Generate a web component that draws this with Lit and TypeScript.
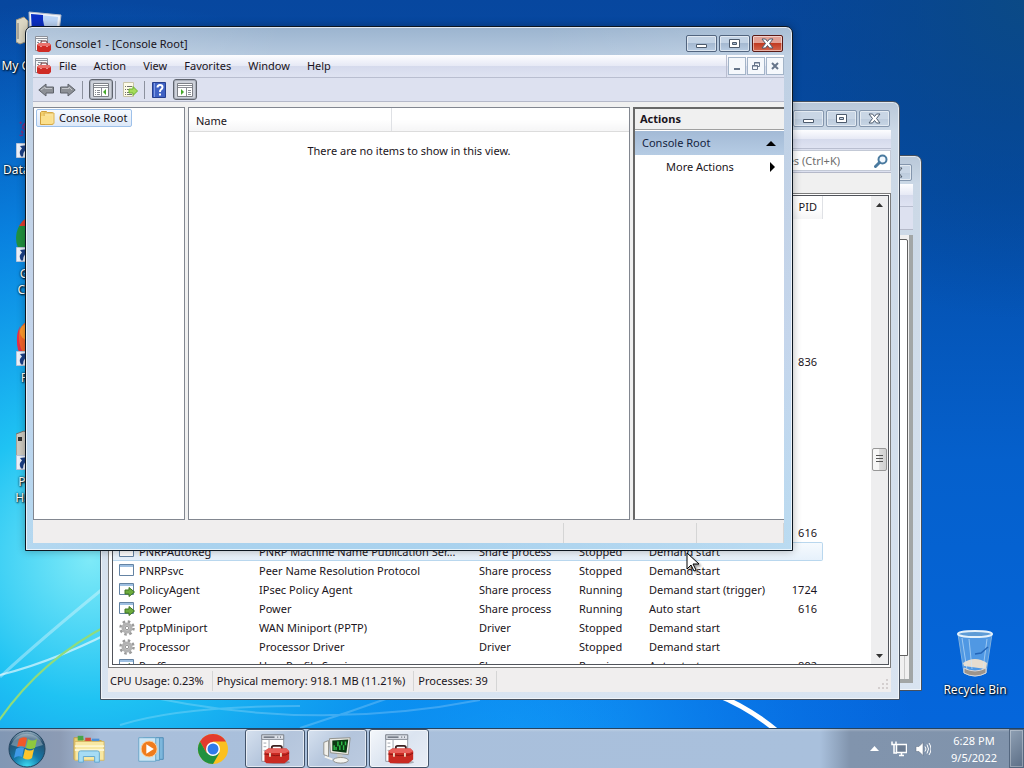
import { LitElement, html, css, svg, nothing, type TemplateResult } from "lit";
import { customElement, property } from "lit/decorators.js";
import { classMap } from "lit/directives/class-map.js";

type ServiceIcon = "stopped" | "running" | "driver";

interface ServiceRow {
    icon?: ServiceIcon;
    name?: string;
    description?: string;
    type?: string;
    status?: string;
    start?: string;
    pid?: string;
    selected?: boolean;
}

// Rows above the selected one carry only the fields that are needed.
const leadingRows: ServiceRow[] = Array.from({ length: 17 }, (_, i) => ({
    pid: i === 7 ? "836" : i === 16 ? "616" : "",
}));

const services: ServiceRow[] = [
    ...leadingRows,
    { icon: "stopped", name: "PNRPAutoReg", description: "PNRP Machine Name Publication Ser...", type: "Share process", status: "Stopped", start: "Demand start", selected: true },
    { icon: "stopped", name: "PNRPsvc", description: "Peer Name Resolution Protocol", type: "Share process", status: "Stopped", start: "Demand start" },
    { icon: "running", name: "PolicyAgent", description: "IPsec Policy Agent", type: "Share process", status: "Running", start: "Demand start (trigger)", pid: "1724" },
    { icon: "running", name: "Power", description: "Power", type: "Share process", status: "Running", start: "Auto start", pid: "616" },
    { icon: "driver", name: "PptpMiniport", description: "WAN Miniport (PPTP)", type: "Driver", status: "Stopped", start: "Demand start" },
    { icon: "driver", name: "Processor", description: "Processor Driver", type: "Driver", status: "Stopped", start: "Demand start" },
    { icon: "running", name: "ProfSvc", description: "User Profile Service", type: "Share process", status: "Running", start: "Auto start", pid: "892" },
];

const toolbox = svg`
  <path d="M3 1h24v29H3z" fill="#fff" stroke="#8b919b"/>
  <path d="M3 1h24v5H3z" fill="#dfe3ea" stroke="#7d838d"/>
  <path d="M5 3.500h12M20 3.500h1M23 3.500h1" stroke="#555c68" stroke-width="1.500"/>
  <path d="M11 6v20M5 10h3M5 14h3M5 18h3M5 22h3" stroke="#9aa1ab"/>
  <ellipse cx="21" cy="31" rx="13" ry="2" fill="#000" opacity=".25"/>
  <path d="M14 17v-2q0-2 2-2h7q2 0 2 2v2" fill="none" stroke="#3c2020" stroke-width="2"/>
  <path d="M6 19l4-3h20l3 3v9l-5 4H8l-2-2z" fill="#c92a22"/>
  <path d="M6 19l4-3h20l3 3-4 2H8z" fill="#e8605a"/>
  <path d="M6 22q12 3 23 1l4-2" fill="none" stroke="#8a1612"/>
  <path d="M12 21v4M24 21v4" stroke="#f0d8c0" stroke-width="2"/>
`;

const icons: Record<string, TemplateResult> = {
    toolbox: html`<svg viewBox="0 0 35 33">${toolbox}</svg>`,
    mmc: html`<svg viewBox="0 0 16 16">
      <path d="M.500.500h12v14h-12z" fill="#f6f7f9" stroke="#8d929b" />
      <path d="M1 2.500h11M3 4.500h4M2 6.500h2" stroke="#8d929b" />
      <path d="M6 8V6q0-1 1-1h4q1 0 1 1v2" fill="none" stroke="#5a2020" />
      <path d="M2 9l2-2h10l2 2v5l-2 2H4l-2-1z" fill="#cf2b25" />
      <path d="M2 9l2-2h10l2 2-2 1H4z" fill="#ea716b" />
      <path d="M6 10v1M12 10v1" stroke="#fff" />
    </svg>`,
    back: html`<svg viewBox="0 0 16 14"><path d="M8 1v3h7.500v6H8v3L.8 7z" fill="#8d9096" stroke="#5f636b" /><path d="M3 7l4-3v1.500h7" fill="none" stroke="#c3c5ca" /></svg>`,
    forward: html`<svg viewBox="0 0 16 14"><path d="M8 1v3H.500v6H8v3l7.200-6z" fill="#8d9096" stroke="#5f636b" /><path d="M2 5.500h7V4l3 3" fill="none" stroke="#c3c5ca" /></svg>`,
    tree: html`<svg viewBox="0 0 16 16"><path d="M.500 1.500h15v13H.500z" fill="#fff" stroke="#7d8087" /><path d="M1 3.500h14M1 5.500h14M8.500 6v8" stroke="#8a8d94" /><path d="M2 8.500h1M4 8.500h3M2 10.500h1M4 10.500h3M2 12.500h1M4 12.500h3" stroke="#8a8d94" /><path d="M13 7v6l-3-3z" fill="#45a82a" /></svg>`,
    pane: html`<svg viewBox="0 0 16 16"><path d="M.500 1.500h15v13H.500z" fill="#fff" stroke="#7d8087" /><path d="M1 3.500h14M1 5.500h14M9.500 6v8" stroke="#8a8d94" /><path d="M11 8.500h3M11 10.500h3M11 12.500h3" stroke="#8a8d94" /><path d="M4 7v6l3-3z" fill="#45a82a" /></svg>`,
    export: html`<svg viewBox="0 0 16 16"><path d="M1.500.500h10v14h-10z" fill="#fdfbe8" stroke="#c8c4a8" /><path d="M3 4.500h1M5 4.500h5M3 7.500h1M5 7.500h4M3 10.500h1M5 10.500h3M3 12.500h1M5 12.500h5" stroke="#707070" /><path d="M7 7h4V4.500L15.500 9 11 13.500V11H7z" fill="#a5dc5a" stroke="#6fb030" /></svg>`,
    help: html`<svg viewBox="0 0 14 16"><path d="M.500.500h13v15H.500z" fill="#3f62c4" stroke="#263f8f" /><path d="M2.500 1v14" stroke="#7f9be4" /><path d="M5.500 5.500q0-2.500 2.500-2.500t2.500 2.300q0 1.400-1.500 2.200Q8 8.200 8 10" fill="none" stroke="#fff" stroke-width="2" /><path d="M7 11.500h2v2H7z" fill="#fff" /></svg>`,
    folder: html`<svg viewBox="0 0 16 16"><path d="M1.500 2.500l1-1h5l1 1h5v12h-12z" fill="#f3cf6c" stroke="#cf9f3d" /><path d="M5 3h10v10q0 1-1 1H6z" fill="#fae29a" stroke="#dcb452" /><path d="M2 6h11v8H2z" fill="#fbe08d" /></svg>`,
    stopped: html`<svg viewBox="0 0 16 16"><path d="M.500 1.500h14v11H.500z" fill="#fff" stroke="#6483a3" /><path d="M1 3h13" stroke="#9fc0e2" stroke-width="2" /></svg>`,
    running: html`<svg viewBox="0 0 16 16"><path d="M.500 1.500h14v11H.500z" fill="#fff" stroke="#6483a3" /><path d="M1 3h13" stroke="#9fc0e2" stroke-width="2" /><path d="M6 8h4V5.500l5.500 4.500-5.500 4.500V12H6z" fill="#6cab3d" stroke="#417724" /></svg>`,
    driver: html`<svg viewBox="0 0 16 16"><circle cx="8" cy="8" r="6.500" fill="none" stroke="#9a9a9a" stroke-width="2.500" stroke-dasharray="2.500 2.600" /><circle cx="8" cy="8" r="4" fill="#e4e4e4" stroke="#b2b2b2" stroke-width="3" /><circle cx="8" cy="8" r="1.800" fill="#fff" stroke="#8f8f8f" /></svg>`,
    search: html`<svg viewBox="0 0 14 14"><circle cx="8.500" cy="5.500" r="4" fill="#f2f8ff" stroke="#4a7a9f" stroke-width="2" /><path d="M5.500 8.500L1.500 12.500" stroke="#4a7a9f" stroke-width="3" stroke-linecap="round" /></svg>`,
    computer: html`<svg viewBox="0 0 48 48"><path d="M0 14l8-3 4 4v20l-8 3-4-2z" fill="#ddd8c4" stroke="#99917c" /><path d="M2 17v16" stroke="#777" /><path d="M13 6l32 3-3 25-28-4z" fill="#f0f3f8" stroke="#b4bccb" /><path d="M15 8l27 3-2 19-24-3z" fill="#bcd6f8" /><path d="M15 8l12 1q-1 11 6 19l-17-2z" fill="#0a2fc4" /></svg>`,
    database: html`<svg viewBox="0 0 48 48"><path d="M4 12l11 12M14 12L4 26M15 8q-10 6-9 18" fill="none" stroke="#7c3080" stroke-width="2" stroke-dasharray="2 2" /><circle cx="28" cy="24" r="17" fill="none" stroke="#a02a58" stroke-width="3" /></svg>`,
    chromeBig: html`<svg viewBox="0 0 48 48"><circle cx="24" cy="24" r="24" fill="#20913f" /><path d="M3 12A24 24 0 0145 12z" fill="#e33b2e" /></svg>`,
    firefox: html`<svg viewBox="0 0 48 48"><circle cx="24" cy="22" r="23" fill="#f5652a" /><path d="M4 8Q0 26 10 40L2 32Q-1 18 4 8z" fill="#e6304a" /><circle cx="12" cy="14" r="8" fill="#ff9a2e" /></svg>`,
    hacker: html`<svg viewBox="0 0 48 48"><path d="M0 12l8-3 5 3v24l-8 4-5-3z" fill="#cfccc2" stroke="#77746c" /><path d="M2 15h4v4H2z" fill="#333" /><path d="M14 8h30v28H14z" fill="#e4e4e0" stroke="#888" /></svg>`,
    shortcut: html`<svg viewBox="0 0 15 15"><path d="M.500.500h14v14H.500z" fill="#eef3fb" stroke="#b9c6da" /><path d="M5 13.500q-3-5 1-8L4 3l8-1-1 7.500-2-2q-2 2-2 6z" fill="#1c4187" /></svg>`,
    bin: html`<svg viewBox="0 0 36 48"><path d="M1 4l6 39q11 6 22 0l6-39z" fill="#9ccbef" fill-opacity=".5" stroke="#7fb0de" /><path d="M7 36l-1-3q12-8 24 0l-1 6z" fill="#e8ddcf" /><path d="M7 38q11 6 22 0v5q-11 6-22 0z" fill="#9c948c" stroke="#d8d8dc" /><path d="M5 8l5 32M12 9l3 30M30 9l-4 30" stroke="#cfe8fb" opacity=".6" /><path d="M31 17l-7 6-6 1" fill="none" stroke="#2465b8" stroke-width="1.500" /><ellipse cx="18" cy="4" rx="17" ry="3" fill="#5d9bd6" stroke="#e4f1fb" stroke-width="2" /></svg>`,
    orb: html`<svg viewBox="0 0 38 38">
      <defs>
        <radialGradient id="orb" cx=".5" cy="1" r="1"><stop offset="0" stop-color="#3fe0f5" /><stop offset=".4" stop-color="#1578a8" /><stop offset=".8" stop-color="#26506f" /><stop offset="1" stop-color="#9fb8c8" /></radialGradient>
      </defs>
      <circle cx="19" cy="19" r="18" fill="url(#orb)" stroke="#22445f" />
      <path d="M3 15A17 17 0 0135 15Q19 21 3 15z" fill="#fff" opacity=".3" />
      <path d="M11 9q4-3 8-1l-2 9q-4-2-8 0z" fill="#f0582a" />
      <path d="M20 9q4 3 9 0l-2 9q-5 2-9 0z" fill="#8fc83e" />
      <path d="M8 19q4-3 8-1l-2 9q-4-2-8 1z" fill="#3f9ae8" />
      <path d="M17 19q5 3 9 0l-2 9q-4 3-9 0z" fill="#fcc52c" />
    </svg>`,
    explorer: html`<svg viewBox="0 0 34 30"><path d="M1 3h9l2 3h18v20H1z" fill="#e7cd72" stroke="#bf9e47" /><path d="M5 1h6v5H5z" fill="#48a648" /><path d="M13 3h6v4h-6z" fill="#d44a3a" /><path d="M20 4h8v4h-8z" fill="#4f8fd6" /><path d="M2 7h31v20H2z" fill="#f8e8a3" stroke="#d6b862" /><path d="M2 12h31M2 16h31" stroke="#fdf6d0" stroke-width="2" /><path d="M6 29V19q0-2 2-2h18q2 0 2 2v10h-5v-6H11v6z" fill="#a6dcf5" stroke="#5fa5cf" /></svg>`,
    media: html`<svg viewBox="0 0 34 32"><path d="M12 4h18v23H12z" fill="#7db7dc" stroke="#4c8bb5" /><path d="M9 4h17v24H9z" fill="#a9d3ec" stroke="#5a9ac2" /><path d="M4 4h18v25H4z" fill="#cbe6f6" stroke="#6aa5c8" /><circle cx="15" cy="16" r="8.500" fill="#ef7c1e" stroke="#fbd0a0" /><path d="M12 11v10l8-5z" fill="#fff" /></svg>`,
    chrome: html`<svg viewBox="0 0 32 32"><circle cx="16" cy="16" r="15" fill="#fbc01f" /><path d="M3 8.500A15 15 0 0129 8.500H16L9.500 19.700z" fill="#e33b2e" /><path d="M3 8.500A15 15 0 0016 31l6.500-11.200H9.500z" fill="#20913f" /><circle cx="16" cy="16" r="7" fill="#fff" /><circle cx="16" cy="16" r="5.500" fill="#2f7bea" /></svg>`,
    monitor: html`<svg viewBox="0 0 34 32"><path d="M3 9l5-2v17l-5-2z" fill="#f2f1ec" stroke="#8f8f8a" /><path d="M9 5l22-1-2 18-19-2z" fill="#ecebe4" stroke="#90908a" /><path d="M12 7l17-1-2 14-15-2z" fill="#0b3a12" /><path d="M14 17v-5M16 17v-3M18 13V8M20 17v-5M22 12V8M24 17v-5M26 12V8" stroke="#2fbf4a" stroke-width="1.500" /><path d="M17 21l6 1v5l-5 1z" fill="#c9c9c4" /><ellipse cx="21" cy="28" rx="8" ry="3" fill="#f4f4f0" stroke="#90908a" /><path d="M4 24l8 3" stroke="#f4f4f0" stroke-width="2" /></svg>`,
    network: html`<svg viewBox="0 0 16 16"><path d="M5.500 3.500h10v8h-10zM8 14.500h5M10.500 12v2" fill="#6c7c92" stroke="#fff" stroke-width="1.500" /><path d="M1 .500v3h4v-3M3 4v8h3" fill="none" stroke="#fff" stroke-width="1.500" /></svg>`,
    speaker: html`<svg viewBox="0 0 16 16"><path d="M1 5.500h3l4-4v13l-4-4H1z" fill="#fff" stroke="#5d6b7e" stroke-width=".5" /><path d="M10 5.500q2 2.500 0 5M12 3.500q3 4.500 0 9M14 2q4 6 0 12" fill="none" stroke="#fff" /></svg>`,
    cursor: html`<svg viewBox="0 0 14 21"><path d="M1 1v16l4-4 3 6 2-1-3-6h6z" fill="#fff" stroke="#000" /></svg>`,
};

const captionGlyphs: Record<string, TemplateResult> = {
    Minimize: html`<svg viewBox="0 0 13 11"><path d="M1.500 6.500h10v3h-10z" fill="#fff" stroke="#4c5a6c" /></svg>`,
    Maximize: html`<svg viewBox="0 0 13 11"><path d="M1.500 1.500h10v8h-10zM4.500 4.500v2h4v-2z" fill="#fff" fill-rule="evenodd" stroke="#4c5a6c" /></svg>`,
    Close: html`<svg viewBox="0 0 13 11"><path d="M1 1h3.500l2 2.500 2-2.500H12L8.500 5.500 12 10H8.500l-2-2.500-2 2.500H1l3.500-4.500z" fill="#fff" stroke="#4c5a6c" /></svg>`,
};

@customElement("caption-buttons")
export class CaptionButtons extends LitElement {
    @property({ type: Boolean }) active = false;

    static styles = css`
    :host {
      display: flex;
      gap: 2px;
    }

    .caption {
      display: flex;
      align-items: center;
      justify-content: center;
      width: 31px;
      height: 17px;
      padding: 0;
      border: 1px solid #8496ad;
      border-radius: 2px;
      background: linear-gradient(#c9d6e5 50%, #bccbdc 50%, #c7d5e5);
      box-shadow: inset 0 0 0 1px rgba(255, 255, 255, 0.5);
    }

    .caption.active {
      border-color: #52657f;
      background: linear-gradient(#c3d3e5 50%, #a5b9d1 50%, #b8cce2);
    }

    .caption.close {
      border-color: #5a1a16;
      background: linear-gradient(#e2a195 50%, #c13b22 50%, #d5664d);
    }

    svg {
      width: 13px;
      height: 11px;
    }
  `;

    render() {
        return Object.entries(captionGlyphs).map(
            ([label, glyph]) => html`
        <button
          class="caption ${classMap({ active: this.active, close: this.active && label === "Close" })}"
          aria-label=${label}
        >
          ${glyph}
        </button>
      `
        );
    }
}

@customElement("app-root")
export class AppRoot extends LitElement {
    static styles = css`
    :host {
      display: flex;
      flex-direction: column;
      position: relative;
      height: 100vh;
      overflow: hidden;
      background: #0a62c8;
      color: #1a1420;
      font: 11px/16px "Noto Sans", "Open Sans", sans-serif;
    }

    * {
      box-sizing: border-box;
    }

    button,
    input {
      font: inherit;
      color: inherit;
    }

    button {
      padding: 0;
      border: 0;
      background: none;
    }

    svg {
      display: block;
    }

    .wallpaper {
      position: absolute;
      inset: 0;
      width: 100%;
      height: 100%;
    }

    .icon16 svg {
      width: 16px;
      height: 16px;
    }

    /* desktop */
    .desktop {
      position: relative;
      flex: 1;
      min-height: 0;
    }

    .shortcuts {
      display: grid;
      grid-auto-rows: 104px;
      width: 80px;
      padding-top: 6px;
    }

    .shortcut {
      display: flex;
      flex-direction: column;
      align-items: center;
      gap: 4px;
      width: 80px;
      color: #fff;
      font-size: 12px;
      text-align: center;
      text-decoration: none;
      text-shadow: 1px 1px 2px #000, 0 0 2px #000;
    }

    .shortcut-art {
      position: relative;
    }

    .shortcut-art svg {
      width: 48px;
      height: 48px;
    }

    .shortcut-art .link-mark {
      position: absolute;
      left: 0;
      bottom: 0;
    }

    .link-mark svg {
      width: 15px;
      height: 15px;
    }

    .recycle {
      position: absolute;
      right: 9px;
      bottom: 30px;
    }

    .cursor {
      position: absolute;
      left: 686px;
      top: 552px;
      pointer-events: none;
    }

    .cursor svg {
      width: 14px;
      height: 21px;
      filter: drop-shadow(2px 2px 1px rgba(0, 0, 0, 0.4));
    }

    /* windows */
    .window {
      position: absolute;
      display: flex;
      flex-direction: column;
      padding: 0 8px 7px 7px;
      border: 1px solid #46505e;
      border-radius: 7px 7px 0 0;
      background: linear-gradient(#b9c8d9, #cbd8e6 28px, #d9e4f1);
      box-shadow: inset 0 0 0 1px rgba(255, 255, 255, 0.6);
    }

    .window.front {
      left: 25px;
      top: 26px;
      width: 768px;
      height: 525px;
      border-color: #0c1620;
      background: linear-gradient(100deg, rgba(255, 255, 255, 0.2), transparent 30%, transparent 60%, rgba(255, 255, 255, 0.2)),
        linear-gradient(#9bb4cf, #b4c8de 28px, #b9cde8 60%, #a9d2ee);
      box-shadow: inset 0 0 0 1px rgba(255, 255, 255, 0.7), 0 0 8px rgba(0, 0, 0, 0.3);
    }

    .window.services {
      left: 100px;
      top: 101px;
      width: 800px;
      height: 599px;
    }

    .window.back {
      left: 300px;
      top: 155px;
      width: 622px;
      height: 536px;
    }

    .titlebar {
      display: flex;
      align-items: center;
      gap: 4px;
      flex: none;
      height: 28px;
      padding: 5px 1px 0 2px;
    }

    .title {
      flex: 1;
      font-size: 11px;
      font-weight: 400;
      margin: 0;
    }

    .menubar {
      display: flex;
      align-items: center;
      flex: none;
      height: 23px;
      padding-left: 2px;
      border-bottom: 1px solid #b9bed0;
      background: linear-gradient(#fdfdff, #e6e9f5 50%, #d5daec 50%, #dfe3f2);
    }

    .menubar.short {
      height: 19px;
    }

    .menu-items {
      display: flex;
      gap: 1px;
      flex: 1;
    }

    .menu-item {
      padding: 0 8px;
    }

    .mdi {
      display: flex;
      gap: 1px;
      align-self: stretch;
      align-items: center;
      padding-left: 1px;
      border-left: 1px solid #b9bed0;
    }

    .mdi-button {
      display: flex;
      align-items: center;
      justify-content: center;
      width: 18px;
      height: 18px;
      border: 1px solid #a3b4c8;
      background: #f5f8fc;
    }

    .mdi-button svg {
      width: 10px;
      height: 10px;
    }

    .toolbar {
      display: flex;
      align-items: center;
      flex: none;
      gap: 6px;
      height: 24px;
      padding-left: 5px;
      border-bottom: 1px solid #b5b9c9;
      background: #dde1f0;
    }

    .tool {
      display: flex;
      align-items: center;
      justify-content: center;
      height: 21px;
    }

    .tool.pressed {
      width: 24px;
      border: 1px solid #5f646e;
      border-radius: 3px;
      background: #cdd1da;
      box-shadow: inset 0 0 0 1px #a9aeb9;
    }

    .separator {
      width: 1px;
      height: 18px;
      background: #8c919e;
    }

    .pressed + .separator {
      margin-left: -4px;
    }

    .panes {
      display: grid;
      grid-template-columns: 152px 1fr 151px;
      gap: 3px;
      flex: 1;
      min-height: 0;
      padding-top: 5px;
      background: #f0f0f0;
    }

    .pane {
      border: 1px solid #828790;
      background: #fff;
    }

    .tree-item {
      display: flex;
      align-items: center;
      gap: 4px;
      margin: 1px 2px;
      height: 18px;
      padding: 0 4px 0 2px;
      border: 1px solid #9ec1ea;
      border-radius: 2px;
      background: linear-gradient(#f7fafe, #dce8f8);
    }

    .columns {
      width: 100%;
      border-collapse: collapse;
      table-layout: fixed;
    }

    .columns th {
      height: 23px;
      padding: 3px 7px 0;
      font-weight: 400;
      text-align: left;
      border-right: 1px solid #dfe1e5;
      border-bottom: 1px solid #dcdcdc;
      background: linear-gradient(#fff 50%, #f5f5f6);
    }

    .columns th:last-child {
      border-right: 0;
    }

    .columns .name {
      width: 202px;
    }

    .columns td {
      padding: 11px 0 0;
      text-align: center;
    }

    .actions {
      display: flex;
      flex-direction: column;
      border-top: 2px solid #686868;
      border-left: 2px solid #686868;
      border-right: 0;
    }

    .actions-title {
      margin: 0;
      height: 21px;
      padding: 2px 5px;
      border-bottom: 1px solid #a0a0a0;
      background: #f0f0f0;
      font-size: 11px;
      font-weight: 700;
    }

    .action {
      display: flex;
      align-items: center;
      justify-content: space-between;
      height: 24px;
      padding: 0 8px 0 31px;
    }

    .action.group {
      margin-top: 1px;
      padding-left: 7px;
      background: linear-gradient(#a3bad6, #b6cce4);
      color: #14243f;
    }

    .action svg {
      width: 10px;
      height: 10px;
    }

    .statusbar {
      display: flex;
      align-items: center;
      flex: none;
      height: 24px;
      padding-top: 2px;
      background: #f0eeee;
    }

    .statusbar.short {
      height: 23px;
    }

    .status-cell {
      display: flex;
      align-items: center;
      height: 20px;
      padding: 0 8px 0 4px;
      border-right: 1px solid #d5d5d5;
    }

    .status-cell:first-child {
      padding-left: 2px;
    }

    .status-cell.grow {
      flex: 1;
    }

    .status-cell.medium {
      width: 133px;
    }

    .status-cell.small {
      width: 87px;
    }

    .grip {
      align-self: flex-end;
      margin: 0 2px 2px auto;
    }

    .grip svg {
      width: 11px;
      height: 11px;
    }

    /* services window */
    .searchrow {
      display: flex;
      justify-content: flex-end;
      align-items: center;
      flex: none;
      height: 24px;
      border-bottom: 1px solid #b5b9c9;
      background: #dde1f0;
    }

    .searchbox {
      display: flex;
      align-items: center;
      width: 190px;
      height: 21px;
      padding-right: 2px;
      border: 1px solid #c3c9d6;
      background: #fff;
    }

    .searchbox input {
      flex: 1;
      min-width: 0;
      padding: 0 34px 0 0;
      border: 0;
      outline: 0;
      background: none;
      text-align: right;
    }

    .searchbox input::placeholder {
      color: #6d6d6d;
      opacity: 1;
    }

    .searchbox svg {
      width: 14px;
      height: 14px;
    }

    .tabs {
      flex: none;
      height: 20px;
      background: #f0f0f0;
    }

    .list-frame {
      display: flex;
      flex: 1;
      min-height: 0;
      padding: 1px 1px 2px 3px;
      border: 1px solid #7c7c7c;
      background: #fff;
    }

    .list {
      display: flex;
      flex: 1;
      min-width: 0;
      border: 1px solid #50535a;
    }

    .list-scroll {
      flex: 1;
      overflow: hidden;
    }

    .services-table {
      width: 710px;
      border-collapse: separate;
      border-spacing: 0;
      table-layout: fixed;
    }

    .services-table th {
      height: 23px;
      padding: 0 5px 2px;
      font-weight: 400;
      text-align: right;
      border-right: 1px solid #dfe1e5;
      background: linear-gradient(#fff 50%, #f5f5f6);
    }

    .services-table td {
      height: 19px;
      padding: 0 6px;
      line-height: 17px;
      border: 0 solid transparent;
      border-width: 1px 0;
      white-space: nowrap;
    }

    .services-table .pid {
      text-align: right;
    }

    .service-name {
      display: flex;
      align-items: center;
      gap: 4px;
    }

    .selected td {
      border-color: #b9d7ee;
      background: linear-gradient(#f6fafe, #e6f1fb);
    }

    .selected td:last-child {
      border-right: 1px solid #b9d7ee;
      border-radius: 0 2px 2px 0;
    }

    .scrollbar {
      display: flex;
      flex-direction: column;
      flex: none;
      width: 17px;
      background: #eeeeef;
    }

    .scroll-arrow {
      display: flex;
      align-items: center;
      justify-content: center;
      height: 17px;
    }

    .scroll-arrow svg {
      width: 7px;
      height: 4px;
    }

    .before {
      flex: 4;
    }

    .after {
      flex: 3;
    }

    .thumb {
      display: flex;
      align-items: center;
      justify-content: center;
      height: 23px;
      margin: 0 1px;
      border: 1px solid #979797;
      border-radius: 2px;
      background: linear-gradient(90deg, #f6f6f6 50%, #dcdcdc 50%, #d0d0d0);
    }

    .thumb svg {
      width: 7px;
      height: 9px;
    }

    /* back window */
    .back-tools {
      flex: none;
      height: 23px;
      border-bottom: 1px solid #b5b9c9;
      background: #dde1f0;
    }

    .back-client {
      display: flex;
      flex-direction: column;
      flex: 1;
      margin-top: 5px;
      padding: 4px 1px 0 0;
      border: 0 solid #a2a6a6;
      border-width: 0 4px 4px 0;
      background: #f0f0f0;
    }

    .back-page {
      flex: 1;
      border: 1px solid #606060;
      border-radius: 0 2px 0 0;
      background: #fff;
    }

    .back-status {
      height: 23px;
      margin-right: 3px;
      border-right: 1px solid #c8c8c8;
    }

    /* taskbar */
    .taskbar {
      position: relative;
      display: flex;
      align-items: stretch;
      flex: none;
      height: 40px;
      border-top: 1px solid #26435f;
      background: linear-gradient(rgba(255, 255, 255, 0.25), transparent 3px),
        linear-gradient(90deg, #8197b4, #8c9bb4 60px, #a9bfdb 100px, #a9c0dc 820px, #8194ad 850px, #8093ab);
    }

    .start {
      width: 54px;
      display: flex;
      justify-content: center;
      align-items: center;
    }

    .start svg {
      width: 38px;
      height: 38px;
    }

    .apps {
      display: flex;
      gap: 2px;
      flex: 1;
      padding-left: 5px;
    }

    .app {
      display: flex;
      align-items: center;
      justify-content: center;
      width: 60px;
    }

    .app svg {
      width: 32px;
      height: 32px;
    }

    .app.open {
      border: 1px solid #42536a;
      border-radius: 3px;
      background: linear-gradient(135deg, #d6e1ef, #b4c5dc 50%, #bccbe0);
      box-shadow: inset 0 0 0 1px rgba(255, 255, 255, 0.6);
    }

    .app.focused {
      background: linear-gradient(135deg, #f4f7fb, #dbe4f0 50%, #e9eef6);
    }

    .tray {
      display: flex;
      align-items: center;
      gap: 8px;
    }

    .tray-arrow svg {
      width: 9px;
      height: 5px;
      margin-right: 4px;
    }

    .clock {
      width: 70px;
      color: #fff;
      line-height: 17px;
      text-align: center;
    }

    .show-desktop {
      width: 15px;
      border: 1px solid #54677f;
      background: linear-gradient(135deg, #8fa0b4, #5c6e86);
      box-shadow: inset 0 0 0 1px rgba(255, 255, 255, 0.3);
    }
  `;

    private renderWallpaper() {
        return html`
      <svg class="wallpaper" viewBox="0 0 1024 768" preserveAspectRatio="none" aria-hidden="true">
        <defs>
          <linearGradient id="sky" x2="0" y2="1">
            <stop offset="0" stop-color="#07479f" />
            <stop offset=".25" stop-color="#044da8" />
            <stop offset=".6" stop-color="#0560cc" />
            <stop offset="1" stop-color="#0567de" />
          </linearGradient>
          <radialGradient id="glow" gradientUnits="userSpaceOnUse" cx="90" cy="560" r="560">
            <stop offset="0" stop-color="#7eeaf8" />
            <stop offset=".25" stop-color="#1fc3f3" />
            <stop offset=".6" stop-color="#0a92f0" stop-opacity=".75" />
            <stop offset="1" stop-color="#0a80f0" stop-opacity="0" />
          </radialGradient>
          <radialGradient id="low" gradientUnits="userSpaceOnUse" cx="500" cy="780" r="420">
            <stop offset="0" stop-color="#14a6fb" />
            <stop offset="1" stop-color="#0a80f8" stop-opacity="0" />
          </radialGradient>
          <radialGradient id="corner" gradientUnits="userSpaceOnUse" cx="1024" cy="0" r="320">
            <stop offset="0" stop-color="#0b4a86" />
            <stop offset="1" stop-color="#04408a" stop-opacity="0" />
          </radialGradient>
        </defs>
        <path d="M0 0h1024v768H0z" fill="url(#sky)" />
        <path d="M0 0h1024v768H0z" fill="url(#low)" />
        <path d="M0 0h1024v768H0z" fill="url(#glow)" />
        <path d="M0 0h1024v768H0z" fill="url(#corner)" />
        <g fill="none" stroke="#fff">
          <path d="M0 677Q40 640 105 587" opacity=".35" stroke-width="3" />
          <path d="M0 675Q60 660 130 622" opacity=".6" stroke-width="2" />
          <path d="M120 725Q180 706 300 706M300 728Q350 712 400 694M120 690Q300 735 480 700" opacity=".2" stroke-width="2" />
          <path d="M715 694Q750 708 778 732" stroke-width="5" />
        </g>
        <path d="M-2 722Q40 660 110 624" fill="none" stroke="#8fdc7c" stroke-width="2" />
      </svg>
    `;
    }

    private renderShortcut(label: string, icon: string, linked = true) {
        return html`
      <a class="shortcut" href="#">
        <span class="shortcut-art">
          ${icons[icon]} ${linked ? html`<span class="link-mark">${icons.shortcut}</span>` : nothing}
        </span>
        ${label}
      </a>
    `;
    }

    private renderBackWindow() {
        return html`
      <section class="window back">
        <div class="titlebar"><span class="title"></span><caption-buttons></caption-buttons></div>
        <div class="menubar"></div>
        <div class="back-tools"></div>
        <div class="back-client">
          <div class="back-page"></div>
          <div class="back-status"></div>
        </div>
      </section>
    `;
    }

    private renderService(row: ServiceRow) {
        return html`
      <tr class=${classMap({ selected: !!row.selected })}>
        <td><span class="service-name icon16">${row.icon ? icons[row.icon] : nothing}${row.name}</span></td>
        <td>${row.description}</td>
        <td>${row.type}</td>
        <td>${row.status}</td>
        <td>${row.start}</td>
        <td class="pid">${row.pid}</td>
      </tr>
    `;
    }

    private renderServicesWindow() {
        return html`
      <section class="window services">
        <div class="titlebar"><span class="title"></span><caption-buttons></caption-buttons></div>
        <div class="menubar short"></div>
        <div class="searchrow">
          <label class="searchbox">
            <input type="text" aria-label="Search" placeholder="Search Services (Ctrl+K)" />
            ${icons.search}
          </label>
        </div>
        <div class="tabs"></div>
        <div class="list-frame">
          <div class="list">
            <div class="list-scroll">
              <table class="services-table">
                <colgroup>
                  <col width="140" />
                  <col width="220" />
                  <col width="100" />
                  <col width="70" />
                  <col width="140" />
                  <col width="40" />
                </colgroup>
                <thead>
                  <tr><th></th><th></th><th></th><th></th><th></th><th>PID</th></tr>
                </thead>
                <tbody>${services.map((row) => this.renderService(row))}</tbody>
              </table>
            </div>
            <div class="scrollbar">
              <button class="scroll-arrow" aria-label="Scroll up"><svg viewBox="0 0 7 4"><path d="M0 4l3.500-4L7 4z" fill="#333" /></svg></button>
              <div class="before"></div>
              <div class="thumb"><svg viewBox="0 0 7 9"><path d="M0 .500h7M0 3.500h7M0 6.500h7" stroke="#555" /></svg></div>
              <div class="after"></div>
              <button class="scroll-arrow" aria-label="Scroll down"><svg viewBox="0 0 7 4"><path d="M0 0l3.500 4L7 0z" fill="#333" /></svg></button>
            </div>
          </div>
        </div>
        <div class="statusbar">
          <span class="status-cell">CPU Usage: 0.23%</span>
          <span class="status-cell">Physical memory: 918.1 MB (11.21%)</span>
          <span class="status-cell">Processes: 39</span>
          <span class="grip"><svg viewBox="0 0 11 11"><path d="M8 0h2v2H8zM8 4h2v2H8zM8 8h2v2H8zM4 4h2v2H4zM4 8h2v2H4zM0 8h2v2H0z" fill="#d4cfcf" /></svg></span>
        </div>
      </section>
    `;
    }

    private renderConsoleWindow() {
        const menus = ["File", "Action", "View", "Favorites", "Window", "Help"];
        return html`
      <section class="window front">
        <div class="titlebar">
          <span class="icon16">${icons.mmc}</span>
          <h1 class="title">Console1 - [Console Root]</h1>
          <caption-buttons active></caption-buttons>
        </div>
        <div class="menubar">
          <span class="icon16">${icons.mmc}</span>
          <nav class="menu-items">${menus.map((name) => html`<button class="menu-item">${name}</button>`)}</nav>
          <div class="mdi">
            <button class="mdi-button" aria-label="Minimize"><svg viewBox="0 0 10 10"><path d="M2 8h6" stroke="#66758a" stroke-width="2" /></svg></button>
            <button class="mdi-button" aria-label="Restore"><svg viewBox="0 0 10 10"><path d="M3.500 4V1.500h5v4H7M3 2h6M1.500 4.500h5v4h-5zM1 5h6" fill="none" stroke="#66758a" /></svg></button>
            <button class="mdi-button" aria-label="Close"><svg viewBox="0 0 10 10"><path d="M2 2l6 6M8 2L2 8" stroke="#66758a" stroke-width="2" /></svg></button>
          </div>
        </div>
        <div class="toolbar">
          <button class="tool icon16" aria-label="Back">${icons.back}</button>
          <button class="tool icon16" aria-label="Forward">${icons.forward}</button>
          <span class="separator"></span>
          <button class="tool icon16 pressed" aria-label="Show tree">${icons.tree}</button>
          <span class="separator"></span>
          <button class="tool icon16" aria-label="Export list">${icons.export}</button>
          <span class="separator"></span>
          <button class="tool icon16" aria-label="Help">${icons.help}</button>
          <button class="tool icon16 pressed" aria-label="Show action pane">${icons.pane}</button>
        </div>
        <div class="panes">
          <div class="pane">
            <button class="tree-item icon16">${icons.folder}Console Root</button>
          </div>
          <div class="pane">
            <table class="columns">
              <thead><tr><th class="name">Name</th><th></th></tr></thead>
              <tbody><tr><td colspan="2">There are no items to show in this view.</td></tr></tbody>
            </table>
          </div>
          <div class="pane actions">
            <h2 class="actions-title">Actions</h2>
            <button class="action group">Console Root<svg viewBox="0 0 10 10"><path d="M0 8l5-5 5 5z" /></svg></button>
            <button class="action">More Actions<svg viewBox="0 0 10 10"><path d="M4 0l5 5-5 5z" /></svg></button>
          </div>
        </div>
        <div class="statusbar short">
          <span class="status-cell grow"></span>
          <span class="status-cell medium"></span>
          <span class="status-cell small"></span>
        </div>
      </section>
    `;
    }

    private renderTaskbar() {
        return html`
      <footer class="taskbar">
        <button class="start" aria-label="Start">${icons.orb}</button>
        <div class="apps">
          <button class="app" aria-label="Explorer">${icons.explorer}</button>
          <button class="app" aria-label="Media Player">${icons.media}</button>
          <button class="app" aria-label="Chrome">${icons.chrome}</button>
          <button class="app open" aria-label="Console">${icons.toolbox}</button>
          <button class="app open" aria-label="Process list">${icons.monitor}</button>
          <button class="app open focused" aria-label="Console1">${icons.toolbox}</button>
        </div>
        <div class="tray">
          <button class="tray-arrow" aria-label="Hidden icons"><svg viewBox="0 0 9 5"><path d="M0 5l4.500-5L9 5z" fill="#fff" /></svg></button>
          <button class="icon16" aria-label="Network">${icons.network}</button>
          <button class="icon16" aria-label="Volume">${icons.speaker}</button>
          <time class="clock">6:28 PM<br />9/5/2022</time>
        </div>
        <button class="show-desktop" aria-label="Show desktop"></button>
      </footer>
    `;
    }

    render() {
        return html`
      ${this.renderWallpaper()}
      <main class="desktop">
        <div class="shortcuts">
          ${this.renderShortcut("My Computer", "computer", false)}
          ${this.renderShortcut("Data Sources", "database")}
          ${this.renderShortcut("Google Chrome", "chromeBig")}
          ${this.renderShortcut("Firefox", "firefox")}
          ${this.renderShortcut("Process Hacker 2", "hacker")}
        </div>
        <div class="recycle">${this.renderShortcut("Recycle Bin", "bin", false)}</div>
        ${this.renderBackWindow()} ${this.renderServicesWindow()} ${this.renderConsoleWindow()}
        <span class="cursor">${icons.cursor}</span>
      </main>
      ${this.renderTaskbar()}
    `;
    }
}
